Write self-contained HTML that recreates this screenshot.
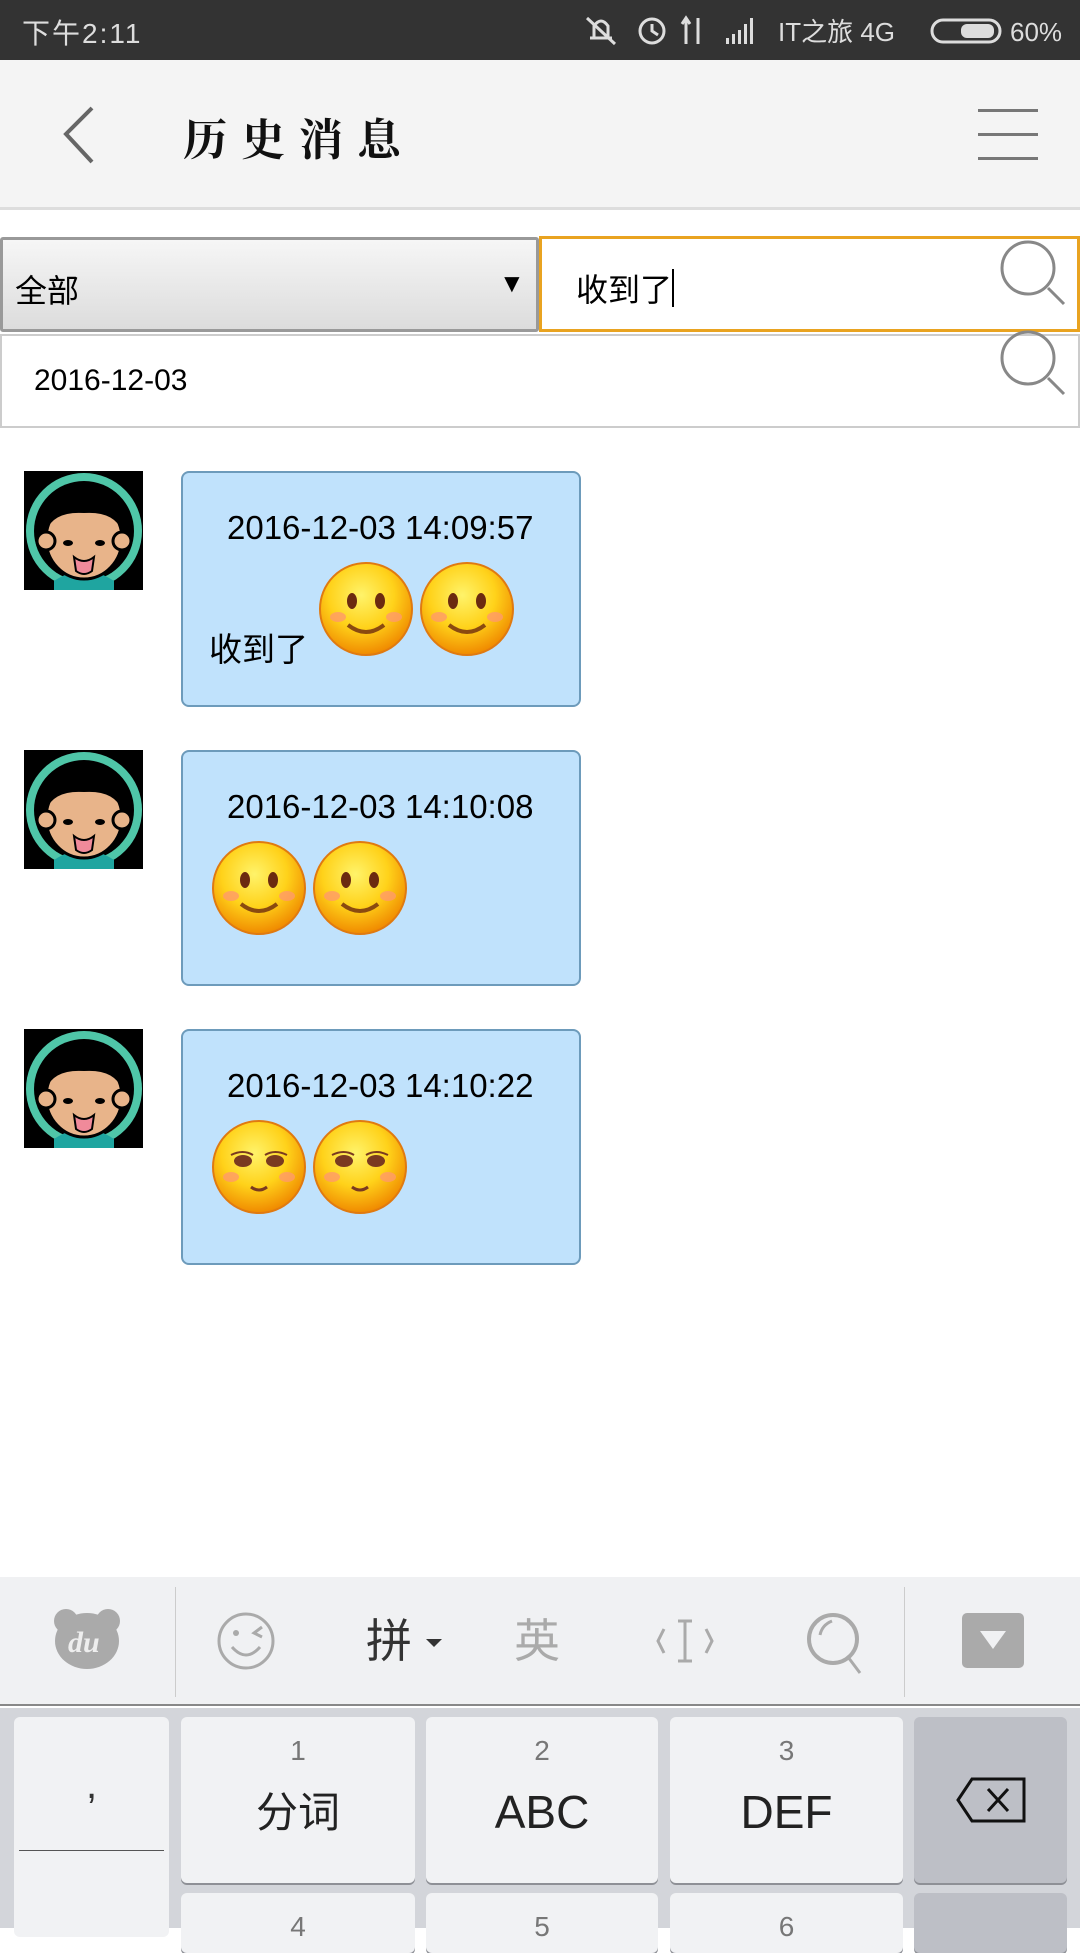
<!DOCTYPE html>
<html><head><meta charset="utf-8">
<style>
*{margin:0;padding:0;box-sizing:border-box}
body{width:1080px;height:1920px;position:relative;overflow:hidden;background:#fff;font-family:"Liberation Sans","Noto Sans CJK SC",sans-serif}
.a{position:absolute}
.sb{left:0;top:0;width:1080px;height:60px;background:#333;color:#ddd}
.hd{left:0;top:60px;width:1080px;height:150px;background:#f4f4f4;border-bottom:3px solid #ddd}
.bub{left:181px;width:400px;height:236px;background:#c0e2fc;border:2px solid #6d9bbb;border-radius:8px}
.ts{font-size:33px;color:#000;left:44px;top:36px;white-space:nowrap}
.key{background:#f1f2f4;border-radius:6px;box-shadow:0 2px 0 #8e9096;text-align:center}
.num{font-size:28px;color:#777;position:absolute;width:100%;top:18px}
.lab{font-size:46px;color:#222;position:absolute;width:100%;top:68px}
</style></head><body>
<svg width="0" height="0" style="position:absolute">
<defs>
<radialGradient id="eg" cx="45%" cy="35%" r="65%"><stop offset="0" stop-color="#fff36a"/><stop offset="0.55" stop-color="#ffd21a"/><stop offset="1" stop-color="#f08a00"/></radialGradient>
<g id="e1"><circle cx="48" cy="48" r="46" fill="url(#eg)" stroke="#e07a10" stroke-width="2"/><ellipse cx="34" cy="40" rx="5" ry="8" fill="#6b2a10"/><ellipse cx="62" cy="40" rx="5" ry="8" fill="#6b2a10"/><ellipse cx="20" cy="56" rx="8" ry="5" fill="#ff9a6a" opacity=".8"/><ellipse cx="76" cy="56" rx="8" ry="5" fill="#ff9a6a" opacity=".8"/><path d="M30 64 Q48 78 66 64" stroke="#8a4a10" stroke-width="4" fill="none"/></g>
<g id="e2"><circle cx="48" cy="48" r="46" fill="url(#eg)" stroke="#e07a10" stroke-width="2"/><ellipse cx="32" cy="42" rx="9" ry="6" fill="#7a3a20"/><ellipse cx="64" cy="42" rx="9" ry="6" fill="#7a3a20"/><path d="M20 36 Q32 30 42 36 M54 36 Q64 30 76 36" stroke="#7a3a20" stroke-width="2" fill="none"/><ellipse cx="20" cy="58" rx="8" ry="5" fill="#ff9a6a" opacity=".8"/><ellipse cx="76" cy="58" rx="8" ry="5" fill="#ff9a6a" opacity=".8"/><path d="M40 68 Q48 74 56 68" stroke="#7a3a20" stroke-width="3" fill="none"/></g>
<g id="av"><rect width="119" height="119" fill="#000"/><circle cx="60" cy="60" r="58" fill="#4fc6a8"/><circle cx="60" cy="60" r="50" fill="#000"/><path d="M30 110 Q60 90 90 110 L90 119 L30 119Z" fill="#1fa5a0"/><ellipse cx="60" cy="68" rx="38" ry="40" fill="#e8b48a" stroke="#000" stroke-width="3"/><circle cx="22" cy="70" r="9" fill="#e8b48a" stroke="#000" stroke-width="3"/><circle cx="98" cy="70" r="9" fill="#e8b48a" stroke="#000" stroke-width="3"/><path d="M22 60 Q24 22 60 20 Q96 22 98 60 Q90 40 60 42 Q30 40 22 60Z" fill="#000"/><path d="M52 18 Q60 4 66 18Z" fill="#000"/><ellipse cx="44" cy="72" rx="5" ry="3" fill="#000"/><ellipse cx="76" cy="72" rx="5" ry="3" fill="#000"/><path d="M50 86 Q60 94 70 86 L68 100 Q60 106 52 100Z" fill="#f08a9a" stroke="#000" stroke-width="2"/></g>
</defs></svg>

<div class="a sb">
<div class="a" style="left:22px;top:12px;font-size:28px;letter-spacing:2px">下午2:11</div>
<svg class="a" style="left:582px;top:12px" width="498" height="36" viewBox="0 0 498 36">
<g fill="none" stroke="#ddd" stroke-width="3">
<path d="M8 26 L30 26 M12 26 V14 Q19 4 26 14 V26 M5 6 L33 32"/>
<circle cx="70" cy="19" r="12"/><path d="M70 12 V19 L76 23"/>
<path d="M104 6 V32 M116 6 V32 M100 12 L104 6 L108 12"/>
</g>
<g fill="#ddd"><rect x="144" y="26" width="3" height="6"/><rect x="150" y="22" width="3" height="10"/><rect x="156" y="18" width="3" height="14"/><rect x="162" y="12" width="3" height="20"/><rect x="168" y="6" width="3" height="26"/></g>
<text x="196" y="29" fill="#ddd" font-size="26" font-family="Liberation Sans,Noto Sans CJK SC,sans-serif">IT之旅 4G</text>
<rect x="350" y="8" width="68" height="22" rx="11" fill="none" stroke="#ddd" stroke-width="3"/><rect x="379" y="12" width="33" height="14" rx="6" fill="#ddd"/>
<text x="428" y="29" fill="#ddd" font-size="26" font-family="Liberation Sans,sans-serif">60%</text>
</svg>
</div>

<div class="a hd">
<svg class="a" style="left:60px;top:46px" width="40" height="58"><path d="M32 2 L6 28 L32 56" fill="none" stroke="#666" stroke-width="4"/></svg>
<div class="a" style="left:183px;top:44px;font-size:44px;letter-spacing:14px;font-family:'Noto Serif CJK SC',serif;font-weight:bold;color:#111">历史消息</div>
<div class="a" style="left:978px;top:49px;width:60px;height:3px;background:#777"></div>
<div class="a" style="left:978px;top:73px;width:60px;height:3px;background:#777"></div>
<div class="a" style="left:978px;top:97px;width:60px;height:3px;background:#777"></div>
</div>

<div class="a" style="left:0;top:237px;width:539px;height:95px;border:3px solid #999;border-radius:3px;background:linear-gradient(#f6f6f6,#dcdcdc)">
<div class="a" style="left:12px;top:26px;font-size:32px">全部</div>
<div class="a" style="left:496px;top:28px;font-size:26px">▼</div>
</div>
<div class="a" style="left:539px;top:236px;width:541px;height:96px;border:3px solid #e9a320;background:#fff">
<div class="a" style="left:34px;top:26px;font-size:32px">收到了<span style="display:inline-block;width:2px;height:38px;background:#000;vertical-align:-6px"></span></div>
</div>
<svg class="a" style="left:998px;top:238px" width="80" height="80"><circle cx="30" cy="30" r="26" fill="none" stroke="#888" stroke-width="3"/><path d="M50 50 L66 66" stroke="#888" stroke-width="3"/></svg>
<div class="a" style="left:0;top:334px;width:1080px;height:94px;border:2px solid #ccc;background:#fff">
<div class="a" style="left:32px;top:28px;font-size:30px">2016-12-03</div>
</div>
<svg class="a" style="left:998px;top:328px" width="80" height="80"><circle cx="30" cy="30" r="26" fill="none" stroke="#888" stroke-width="3"/><path d="M50 50 L66 66" stroke="#888" stroke-width="3"/></svg>

<svg class="a" style="left:24px;top:471px" width="119" height="119"><use href="#av"/></svg>
<div class="a bub" style="top:471px">
<div class="a ts">2016-12-03 14:09:57</div>
<div class="a" style="left:26px;top:150px;font-size:33px">收到了</div>
<svg class="a" style="left:135px;top:88px" width="200" height="100"><use href="#e1"/><use href="#e1" x="101"/></svg>
</div>

<svg class="a" style="left:24px;top:750px" width="119" height="119"><use href="#av"/></svg>
<div class="a bub" style="top:750px">
<div class="a ts">2016-12-03 14:10:08</div>
<svg class="a" style="left:28px;top:88px" width="200" height="100"><use href="#e1"/><use href="#e1" x="101"/></svg>
</div>

<svg class="a" style="left:24px;top:1029px" width="119" height="119"><use href="#av"/></svg>
<div class="a bub" style="top:1029px">
<div class="a ts">2016-12-03 14:10:22</div>
<svg class="a" style="left:28px;top:88px" width="200" height="100"><use href="#e2"/><use href="#e2" x="101"/></svg>
</div>

<div class="a" style="left:0;top:1577px;width:1080px;height:129px;background:#f0f1f3;border-bottom:2px solid #888"></div>
<svg class="a" style="left:0;top:1577px" width="1080" height="129" viewBox="0 0 1080 129">
<g fill="#aaa"><circle cx="66" cy="44" r="12"/><circle cx="108" cy="44" r="12"/><ellipse cx="87" cy="64" rx="32" ry="28"/></g>
<text x="68" y="75" fill="#eee" font-size="30" font-style="italic" font-weight="bold" font-family="Liberation Serif,serif">du</text>
<rect x="175" y="10" width="1" height="110" fill="#ccc"/><rect x="904" y="10" width="1" height="110" fill="#ccc"/>
<circle cx="246" cy="64" r="27" fill="none" stroke="#aaa" stroke-width="3"/><circle cx="236" cy="56" r="3" fill="#aaa"/><path d="M262 50 L254 56 L262 60 M232 70 Q246 86 260 70" fill="none" stroke="#aaa" stroke-width="3"/>
<text x="366" y="80" fill="#333" font-size="46" font-family="Noto Sans CJK SC,sans-serif">拼</text><path d="M426 62 L442 62 L434 70Z" fill="#333"/>
<text x="514" y="80" fill="#aaa" font-size="46" font-family="Noto Sans CJK SC,sans-serif">英</text>
<path d="M664 52 L658 64 L664 76 M706 52 L712 64 L706 76 M678 44 H692 M678 84 H692 M685 44 V84" fill="none" stroke="#aaa" stroke-width="3"/>
<circle cx="833" cy="62" r="24" fill="none" stroke="#aaa" stroke-width="4"/><path d="M848 80 L860 96 M820 58 Q822 48 832 44" fill="none" stroke="#aaa" stroke-width="3"/>
<rect x="962" y="36" width="62" height="55" rx="5" fill="#aaa"/><path d="M980 54 L1006 54 L993 72Z" fill="#f0f1f3"/>
</svg>

<div class="a" style="left:0;top:1708px;width:1080px;height:220px;background:#d3d5da"></div>
<div class="a key" style="left:14px;top:1717px;width:155px;height:220px;box-shadow:none">
<div class="a" style="width:100%;top:46px;font-size:40px;color:#333">,</div>
<div class="a" style="left:5px;top:133px;width:145px;height:1px;background:#555"></div>
</div>
<div class="a key" style="left:181px;top:1717px;width:234px;height:166px"><div class="num">1</div><div class="lab" style="font-family:'Noto Sans CJK SC',sans-serif;font-size:42px;top:62px">分词</div></div>
<div class="a key" style="left:426px;top:1717px;width:232px;height:166px"><div class="num">2</div><div class="lab">ABC</div></div>
<div class="a key" style="left:670px;top:1717px;width:233px;height:166px"><div class="num">3</div><div class="lab">DEF</div></div>
<div class="a key" style="left:914px;top:1717px;width:153px;height:166px;background:#bdbfc6">
<svg class="a" style="left:42px;top:60px" width="72" height="46"><path d="M2 23 L16 2 H68 V44 H16Z" fill="none" stroke="#111" stroke-width="3"/><path d="M32 12 L52 34 M52 12 L32 34" stroke="#111" stroke-width="3"/></svg>
</div>
<div class="a key" style="left:181px;top:1893px;width:234px;height:60px"><div class="num">4</div></div>
<div class="a key" style="left:426px;top:1893px;width:232px;height:60px"><div class="num">5</div></div>
<div class="a key" style="left:670px;top:1893px;width:233px;height:60px"><div class="num">6</div></div>
<div class="a key" style="left:914px;top:1893px;width:153px;height:60px;background:#bdbfc6"></div>
</body></html>
